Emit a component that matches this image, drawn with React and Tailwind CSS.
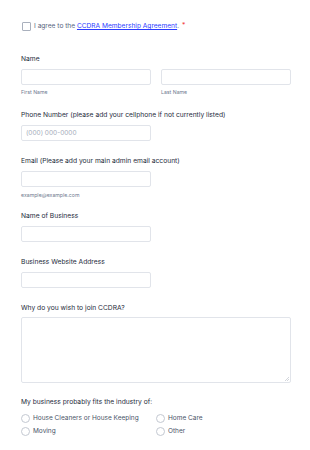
export default function App() {
  const label = "block text-[6.7px] leading-[9px] font-normal text-[#252b3b]";
  const sub = "block text-[5.2px] leading-[7px] text-[#6f7a90]";
  const input =
    "block h-[16px] w-[130px] rounded-[2px] border border-[#e1e4ea] bg-white px-[4px] text-[6.5px] text-[#2c3345] outline-none placeholder:text-[#a5acba]";

  return (
    <div
      className="min-h-[450px] w-[310px] bg-white pl-[21px] pr-[18px] pt-[21px] text-[#2c3345]"
      style={{ fontFamily: "Inter, 'Noto Sans', sans-serif" }}
    >
      <label className="flex items-center gap-[3px] text-[6.6px] leading-[10px] text-[#57647e]">
        <span className="ml-[1px] block h-[9px] w-[9px] shrink-0 rounded-[1px] border border-[#a9b0bd] bg-white" />
        <span>
          I agree to the{" "}
          <a href="#" className="text-[#2b3cff] underline">
            CCDRA Membership Agreement
          </a>
          .
          <span className="relative -top-[1px] ml-[3px] text-[#f23a3c]">*</span>
        </span>
      </label>

      <div className="mt-[24px]">
        <span className={label}>Name</span>
        <div className="mt-[5px] flex gap-[10px]">
          <div>
            <input className={input} />
            <span className={`${sub} mt-[4px]`}>First Name</span>
          </div>
          <div>
            <input className={input} />
            <span className={`${sub} mt-[4px]`}>Last Name</span>
          </div>
        </div>
      </div>

      <div className="mt-[15px]">
        <span className={label}>
          Phone Number (please add your cellphone if not currently listed)
        </span>
        <input className={`${input} mt-[5px]`} placeholder="(000) 000-0000" />
      </div>

      <div className="mt-[16px]">
        <span className={label}>Email (Please add your main admin email account)</span>
        <input className={`${input} mt-[5px]`} />
        <span className={`${sub} mt-[5px]`}>example@example.com</span>
      </div>

      <div className="mt-[13px]">
        <span className={label}>Name of Business</span>
        <input className={`${input} mt-[5px]`} />
      </div>

      <div className="mt-[16px]">
        <span className={label}>Business Website Address</span>
        <input className={`${input} mt-[5px]`} />
      </div>

      <div className="mt-[16px]">
        <span className={label}>Why do you wish to join CCDRA?</span>
        <div className="relative mt-[4px] w-[270px]">
          <textarea className="block h-[66px] w-[270px] resize-none rounded-[2px] border border-[#e1e4ea] bg-white text-[6.5px] outline-none" />
          <svg
            className="absolute bottom-[2px] right-[2px]"
            width="4"
            height="4"
            viewBox="0 0 4 4"
          >
            <path d="M4 0L0 4M4 2L2 4" stroke="#b5bac4" strokeWidth="0.6" />
          </svg>
        </div>
      </div>

      <div className="mt-[15px]">
        <span className={label}>My business probably fits the industry of:</span>
        <div className="mt-[7px] grid grid-cols-[135px_1fr] gap-y-[4px] text-[6.5px] leading-[9px] text-[#4a5468]">
          {["House Cleaners or House Keeping", "Home Care", "Moving", "Other"].map((o) => (
            <label key={o} className="flex h-[9px] items-center gap-[3px]">
              <span className="block h-[9px] w-[9px] shrink-0 rounded-full border border-[#c3c8d1] bg-white" />
              {o}
            </label>
          ))}
        </div>
      </div>
    </div>
  );
}
